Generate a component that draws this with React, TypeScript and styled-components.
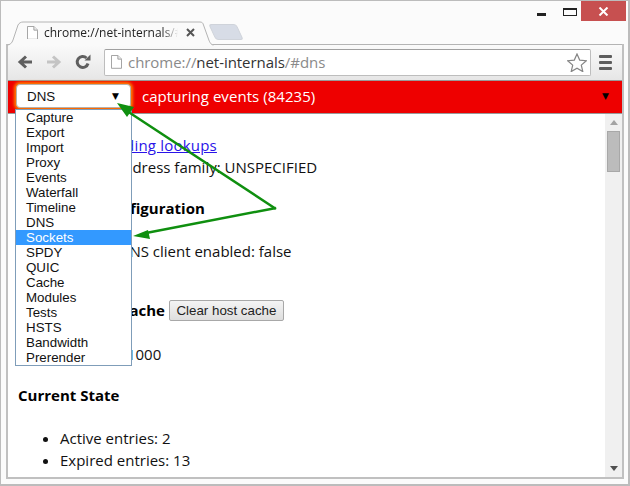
import { styled, createGlobalStyle } from 'styled-components';

const MENU_ITEMS = [
  'Capture',
  'Export',
  'Import',
  'Proxy',
  'Events',
  'Waterfall',
  'Timeline',
  'DNS',
  'Sockets',
  'SPDY',
  'QUIC',
  'Cache',
  'Modules',
  'Tests',
  'HSTS',
  'Bandwidth',
  'Prerender',
];

const PageIcon = ({ size }: { size: number }) => (
  <PageSvg width={size} height={size * 1.25} viewBox="0 0 12 15">
    <path d="M.5.5h7l4 4v10H.5z" fill="#fff" stroke="#999" />
    <path d="M7.5.5v4h4" fill="#eee" stroke="#999" />
  </PageSvg>
);

const App = () => {
  return (
    <Window>
      <GlobalStyle />
      <TitleBar>
        <Tab>
          <TabShape width="207" height="24" viewBox="0 0 207 24">
            <path
              d="M0 24c3 0 5-2 6-5l5-15c1-2 3-3 5-3h177c2 0 3 1 3.500 3l5 14c1 3 2.500 6 5 6"
              fill="#fafafa"
              stroke="#b4b4b4"
            />
          </TabShape>
          <PageIcon size={11} />
          <TabTitle>chrome://net-internals/#dns</TabTitle>
          <TabClose width="9" height="9" viewBox="0 0 9 9">
            <path d="M1 1l7 7M8 1L1 8" stroke="#555" strokeWidth="2" />
          </TabClose>
        </Tab>
        <NewTab />
        <WindowControls>
          <MinimizeButton />
          <MaximizeButton />
          <CloseButton>
            <svg width="11" height="9" viewBox="0 0 11 9">
              <path d="M1.500.5l8 8M9.500.5l-8 8" stroke="#fff" strokeWidth="2" />
            </svg>
          </CloseButton>
        </WindowControls>
      </TitleBar>
      <Frame>
        <Toolbar>
          <NavIcon viewBox="0 0 16 16">
            <path d="M15 8H4M9 2.500L3 8l6 5.500" fill="none" stroke="#5f5f5f" strokeWidth="3" />
          </NavIcon>
          <NavIcon viewBox="0 0 16 16">
            <path d="M1 8h11M7 2.500L13 8l-6 5.500" fill="none" stroke="#c4c4c4" strokeWidth="3" />
          </NavIcon>
          <NavIcon viewBox="0 0 16 16">
            <path d="M13 9.500A5.500 5.500 0 1 1 11.500 4" fill="none" stroke="#5f5f5f" strokeWidth="3" />
            <path d="M9.500 6.500h6v-6z" fill="#5f5f5f" />
          </NavIcon>
          <Omnibox>
            <PageIcon size={11} />
            <Url>
              chrome://<UrlHost>net-internals</UrlHost>/#dns
            </Url>
            <svg width="20" height="19" viewBox="0 0 20 19">
              <path
                d="M10 1l2.700 6.100 6.600.6-5 4.400 1.500 6.500L10 15.200 4.200 18.600l1.500-6.500-5-4.400 6.600-.6z"
                fill="#fff"
                stroke="#858585"
                strokeWidth="1.200"
              />
            </svg>
          </Omnibox>
          <MenuIcon>
            <span />
            <span />
            <span />
          </MenuIcon>
        </Toolbar>
        <StatusBar>
          <ViewSelect>
            DNS
            <SelectArrow>▼</SelectArrow>
          </ViewSelect>
          <StatusText>capturing events (84235)</StatusText>
          <StatusArrow>▼</StatusArrow>
        </StatusBar>
        <Body>
          <Content>
            <EntryList>
              <li>
                <Link>View pending lookups</Link>
              </li>
              <li>Default address family: UNSPECIFIED</li>
            </EntryList>
            <SectionTitle>Async DNS Configuration</SectionTitle>
            <EntryList>
              <li>Internal DNS client enabled: false</li>
            </EntryList>
            <CacheRow>
              <InlineTitle>Host resolver cache</InlineTitle>
              <ClearButton>Clear host cache</ClearButton>
            </CacheRow>
            <EntryList>
              <li>Capacity: 1000</li>
            </EntryList>
            <SectionTitle>Current State</SectionTitle>
            <EntryList>
              <li>Active entries: 2</li>
              <li>Expired entries: 13</li>
            </EntryList>
          </Content>
          <Scrollbar>
            <ScrollArrow viewBox="0 0 8 5">
              <path d="M4 0l4 5H0z" fill="#a3a3a3" />
            </ScrollArrow>
            <ScrollThumb />
            <ScrollArrow viewBox="0 0 8 5">
              <path d="M0 0h8L4 5z" fill="#505050" />
            </ScrollArrow>
          </Scrollbar>
        </Body>
      </Frame>
      <DropdownMenu>
        {MENU_ITEMS.map((item) => (
          <MenuItem key={item} $active={item === 'Sockets'}>
            {item}
          </MenuItem>
        ))}
      </DropdownMenu>
      <Arrows width="630" height="486" viewBox="0 0 630 486">
        <path d="M276 209L127 111M276 208L146 233" fill="none" stroke="#0f8f0f" strokeWidth="2.500" />
        <path d="M117 103l17 4-7 10zM133 236l15-6 2 9z" fill="#0f8f0f" />
      </Arrows>
    </Window>
  );
};

const GlobalStyle = createGlobalStyle`
  body {
    margin: 0;
    background: #fff;
  }
`;

const Window = styled.div`
  position: relative;
  width: 630px;
  height: 486px;
  box-sizing: border-box;
  display: flex;
  flex-direction: column;
  padding: 0 4px 5px 5px;
  overflow: hidden;
  background: #fbfbfb;
  border: 1px solid #bcbcbc;
  border-right-width: 2px;
  border-bottom-width: 2px;
`;

const TitleBar = styled.div`
  flex: none;
  height: 43px;
  display: flex;
  align-items: flex-end;
  padding-left: 1px;
`;

const Tab = styled.div`
  position: relative;
  flex: none;
  width: 206px;
  height: 23px;
  box-sizing: border-box;
  display: flex;
  align-items: center;
  padding: 0 18px 0 20px;
  gap: 6px;
`;

const PageSvg = styled.svg`
  position: relative;
  flex: none;
`;

const TabShape = styled.svg`
  position: absolute;
  left: 0;
  bottom: -1px;
  overflow: visible;
`;

const TabTitle = styled.span`
  position: relative;
  flex: 1;
  min-width: 0;
  overflow: hidden;
  white-space: nowrap;
  font: 12px 'Open Sans', sans-serif;
  color: #222;
  -webkit-mask-image: linear-gradient(90deg, #000 88%, transparent);
  mask-image: linear-gradient(90deg, #000 88%, transparent);
`;

const TabClose = styled.svg`
  position: relative;
  flex: none;
  margin-left: 2px;
`;

const NewTab = styled.div`
  flex: none;
  width: 26px;
  height: 14px;
  margin: 0 0 4px -1px;
  background: #d7dce6;
  border: 1px solid #cfd3da;
  border-radius: 3px;
  transform: skewX(25deg);
`;

const WindowControls = styled.div`
  align-self: flex-start;
  margin-left: auto;
  margin-right: -2px;
  display: flex;
  align-items: flex-start;
`;

const MinimizeButton = styled.div`
  width: 9px;
  height: 3px;
  margin-top: 12px;
  background: #222;
`;

const MaximizeButton = styled.div`
  width: 12px;
  height: 5px;
  margin: 7px 4px 0 17px;
  border: 1px solid #222;
  border-top-width: 2px;
`;

const CloseButton = styled.div`
  width: 45px;
  height: 20px;
  display: flex;
  align-items: center;
  justify-content: center;
  background: #c75050;
`;

const Frame = styled.div`
  flex: 1;
  min-height: 0;
  display: flex;
  flex-direction: column;
  border: solid #c0c0c0;
  border-width: 0 2px 2px;
`;

const Toolbar = styled.div`
  flex: none;
  height: 36px;
  box-sizing: border-box;
  display: flex;
  align-items: center;
  padding: 0 0 1px 9px;
  background: linear-gradient(#fafafa, #e6e6e6);
  border-top: 1px solid #b4b4b4;
`;

const NavIcon = styled.svg`
  flex: none;
  width: 16px;
  height: 16px;
  margin-right: 13px;
`;

const Omnibox = styled.div`
  flex: none;
  width: 487px;
  height: 27px;
  box-sizing: border-box;
  display: flex;
  align-items: center;
  gap: 6px;
  padding: 0 3px 0 6px;
  background: #fff;
  border: 1px solid #bdbdbd;
  border-top-color: #a0a0a0;
  border-radius: 2px;
`;

const Url = styled.span`
  flex: 1;
  font: 15px 'Open Sans', sans-serif;
  letter-spacing: -0.05px;
  color: #8a8a8a;
`;

const UrlHost = styled.span`
  color: #333;
`;

const MenuIcon = styled.div`
  flex: none;
  margin-left: 8px;
  display: flex;
  flex-direction: column;
  gap: 3px;

  span {
    display: block;
    width: 13px;
    height: 3px;
    background: #5c5c5c;
    border-radius: 1px;
  }
`;

const StatusBar = styled.div`
  flex: none;
  height: 34px;
  box-sizing: border-box;
  display: flex;
  align-items: center;
  padding: 0 0 2px 8px;
  background: #ee0000;
  border-top: 1px solid #999;
  border-bottom: 1px solid #999;
`;

const ViewSelect = styled.div`
  flex: none;
  width: 115px;
  height: 24px;
  box-sizing: border-box;
  display: flex;
  align-items: center;
  justify-content: space-between;
  padding: 0 11px 0 10px;
  background: #fff;
  border: 1px solid #b8b0a8;
  border-radius: 4px;
  box-shadow: 0 0 3px 2px #ff7a00;
  font: 13.333px 'Liberation Sans', sans-serif;
  color: #111;
`;

const SelectArrow = styled.span`
  font: 9px 'DejaVu Sans', sans-serif;
  color: #000;
`;

const StatusText = styled.span`
  margin-left: 11px;
  font: 15px 'Open Sans', sans-serif;
  letter-spacing: 0.05px;
  color: #fff;
`;

const StatusArrow = styled.span`
  margin-left: auto;
  margin-right: 13px;
  font: 9px 'DejaVu Sans', sans-serif;
  color: #000;
`;

const Body = styled.div`
  flex: 1;
  min-height: 0;
  display: flex;
  background: #fff;
`;

const Content = styled.div`
  flex: 1;
  padding: 21px 0 0 10px;
  font: 15px/21px 'Open Sans', sans-serif;
  color: #111;
`;

const Link = styled.a`
  color: #2a14e8;
  letter-spacing: 0.2px;
  text-decoration: underline;
`;

const SectionTitle = styled.div`
  margin: 20px 0 22px;
  font-weight: 700;
  color: #000;
`;

const CacheRow = styled.div`
  display: flex;
  align-items: center;
  gap: 4px;
  margin: 37px 0 22px;
  height: 22px;
`;

const InlineTitle = styled.span`
  font-weight: 700;
  color: #000;
`;

const ClearButton = styled.button`
  height: 21px;
  width: 115px;
  padding: 0;
  font: 13.333px 'Liberation Sans', sans-serif;
  color: #222;
  background: linear-gradient(#f4f4f4, #dedede);
  border: 1px solid #a8a8a8;
  border-radius: 2px;
`;

const EntryList = styled.ul`
  margin: 0;
  padding-left: 42px;

  li {
    height: 21.500px;
  }
`;

const Scrollbar = styled.div`
  flex: none;
  width: 17px;
  display: flex;
  flex-direction: column;
  align-items: center;
  padding: 6px 0;
  box-sizing: border-box;
  background: #f0f0f0;
`;

const ScrollArrow = styled.svg`
  flex: none;
  width: 8px;
  height: 5px;

  &:last-child {
    margin-top: auto;
  }
`;

const ScrollThumb = styled.div`
  flex: none;
  width: 13px;
  height: 41px;
  box-sizing: border-box;
  margin-top: 6px;
  background: #bcbcbc;
  border: 1px solid #a8a8a8;
`;

const DropdownMenu = styled.div`
  position: absolute;
  left: 14px;
  top: 108px;
  width: 117px;
  box-sizing: border-box;
  background: #fff;
  border: 1px solid #7f9db9;
`;

const MenuItem = styled.div<{ $active: boolean }>`
  height: 15px;
  padding-left: 10px;
  font: 13.333px/15px 'Liberation Sans', sans-serif;
  color: ${(props) => (props.$active ? '#fff' : '#111')};
  background: ${(props) => (props.$active ? '#3399ff' : 'transparent')};
`;

const Arrows = styled.svg`
  position: absolute;
  left: -1px;
  top: -1px;
  pointer-events: none;
`;

export default App;
